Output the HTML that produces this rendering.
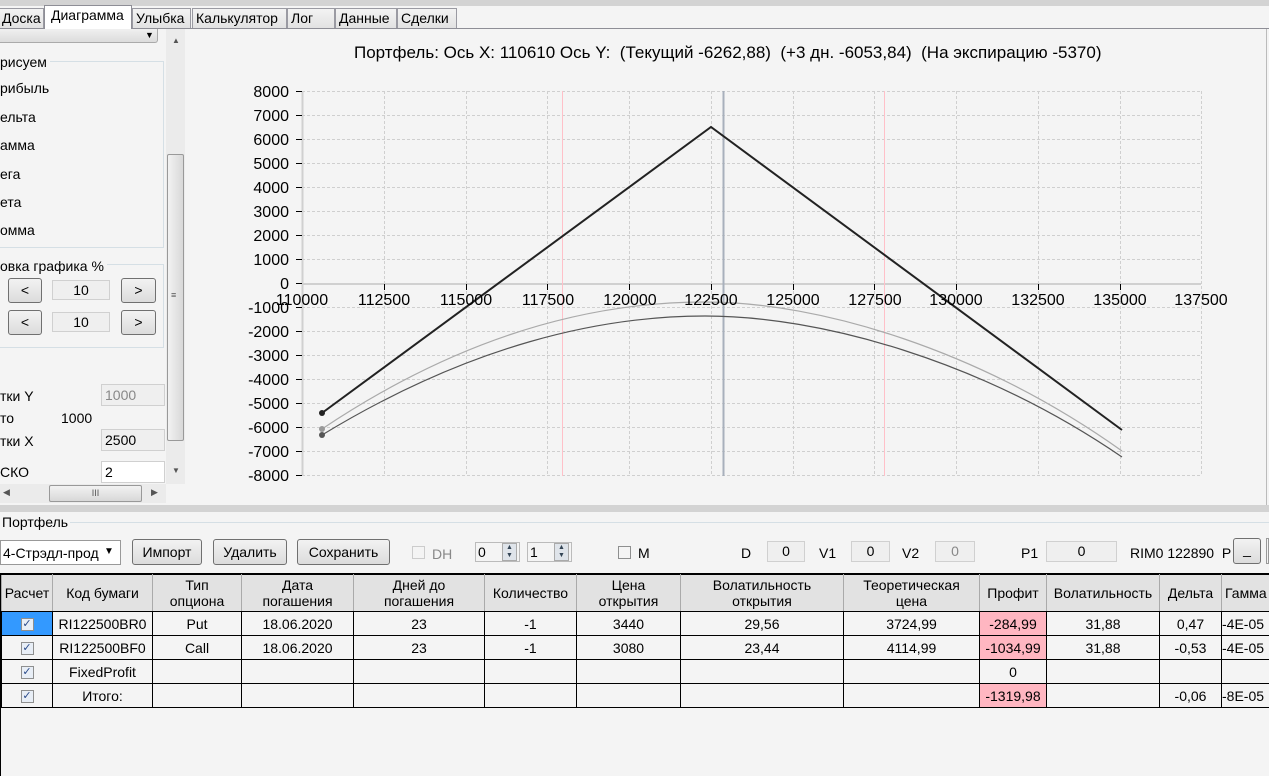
<!DOCTYPE html>
<html><head><meta charset="utf-8"><style>
*{box-sizing:border-box;margin:0;padding:0}
body{width:1269px;height:776px;overflow:hidden;background:#f4f4f4;font-family:"Liberation Sans",sans-serif;font-size:14px;color:#000;position:relative}
.a{position:absolute}
.tab{position:absolute;top:8px;height:20px;border:1px solid #9a9aa2;border-bottom:none;background:linear-gradient(#f3f3f3,#e2e2e2);padding:1px 3px;font-size:14px;white-space:nowrap;overflow:hidden}
.btn{position:absolute;border:1px solid #707070;border-radius:3px;background:linear-gradient(#f2f2f2,#dcdcdc);text-align:center;font-size:14px}
.box{position:absolute;border:1px solid #d0d0d0;background:#efefef;text-align:center;font-size:14px}
.cb{position:absolute;width:13px;height:13px;border:1px solid #8e8f8f;background:#f4f4f4}
table{border-collapse:collapse;position:absolute;left:1px;top:574px;font-size:14px;table-layout:fixed}
td,th{border:1px solid #000;text-align:center;height:24px;padding:0;white-space:nowrap;overflow:hidden}
th{background:#e2e2e2;font-weight:normal;line-height:16px;height:37px;border-color:#000 #aaa #000 #aaa}
.p{background:#ffb6c1}
.chk{display:inline-block;width:13px;height:13px;border:1px solid #8e8f8f;background:#e8eef6;font-size:11px;line-height:11px;color:#2a4a8a;vertical-align:middle}
</style></head><body>
<div class="a" style="left:0;top:0;width:1269px;height:6px;background:#d3d3d3"></div>
<div class="a" style="left:0;top:28px;width:1269px;height:1px;background:#8e8e96"></div>
<div class="tab" style="left:-2px;width:46px">Доска</div>
<div class="tab" style="left:44px;top:5px;height:24px;width:88px;background:#fff;border-color:#8e8e96;padding-left:6px">Диаграмма</div>
<div class="tab" style="left:132px;width:59px">Улыбка</div>
<div class="tab" style="left:192px;width:95px">Калькулятор</div>
<div class="tab" style="left:287px;width:48px">Лог</div>
<div class="tab" style="left:335px;width:62px">Данные</div>
<div class="tab" style="left:397px;width:60px">Сделки</div>

<div class="a" style="left:0;top:29px;width:185px;height:476px;background:#f4f4f4"></div>
<div class="a" style="left:-4px;top:29px;width:162px;height:14px;border:1px solid #aaa;border-top:none;border-radius:0 0 3px 3px;background:linear-gradient(#f0f0f0,#dcdcdc)"></div>
<div class="a" style="left:145px;top:30px;font-size:9px">▼</div>
<div class="a" style="left:0;top:61px;width:164px;height:187px;border-top:1px solid #d5dfe5;border-right:1px solid #d5dfe5;border-bottom:1px solid #d5dfe5"></div>
<div class="a" style="left:0;top:54px;background:#f4f4f4;padding-right:3px">рисуем</div>
<div class="a" style="left:0;top:80px">рибыль</div>
<div class="a" style="left:0;top:109px">ельта</div>
<div class="a" style="left:0;top:137px">амма</div>
<div class="a" style="left:0;top:166px">ега</div>
<div class="a" style="left:0;top:194px">ета</div>
<div class="a" style="left:0;top:222px">омма</div>
<div class="a" style="left:0;top:264px;width:164px;height:84px;border-top:1px solid #d5dfe5;border-right:1px solid #d5dfe5;border-bottom:1px solid #d5dfe5"></div>
<div class="a" style="left:0;top:258px;background:#f4f4f4;padding-right:3px">овка графика %</div>
<div class="btn" style="left:8px;top:278px;width:34px;height:25px;line-height:23px">&lt;</div>
<div class="box" style="left:52px;top:280px;width:58px;height:20px;line-height:18px">10</div>
<div class="btn" style="left:121px;top:278px;width:35px;height:25px;line-height:23px">&gt;</div>
<div class="btn" style="left:8px;top:310px;width:34px;height:25px;line-height:23px">&lt;</div>
<div class="box" style="left:52px;top:312px;width:58px;height:20px;line-height:18px">10</div>
<div class="btn" style="left:121px;top:310px;width:35px;height:25px;line-height:23px">&gt;</div>
<div class="a" style="left:0;top:388px">тки Y</div>
<div class="box" style="left:101px;top:384px;width:64px;height:22px;line-height:20px;text-align:left;padding-left:3px;color:#888">1000</div>
<div class="a" style="left:0;top:410px">то</div>
<div class="a" style="left:61px;top:410px">1000</div>
<div class="a" style="left:0;top:433px">тки X</div>
<div class="box" style="left:101px;top:429px;width:64px;height:22px;line-height:20px;text-align:left;padding-left:3px">2500</div>
<div class="a" style="left:0;top:464px">СКО</div>
<div class="box" style="left:101px;top:461px;width:64px;height:22px;line-height:20px;text-align:left;padding-left:3px;background:#fff">2</div>
<div class="a" style="left:166px;top:29px;width:19px;height:455px;background:#ebebeb"></div>
<div class="a" style="left:172px;top:36px;font-size:8px;color:#555">▲</div>
<div class="a" style="left:167px;top:154px;width:17px;height:287px;border:1px solid #999;border-radius:2px;background:linear-gradient(90deg,#f2f2f2,#d8d8d8)"></div>
<div class="a" style="left:171px;top:290px;font-size:9px;color:#555">≡</div>
<div class="a" style="left:172px;top:466px;font-size:8px;color:#555">▼</div>
<div class="a" style="left:0;top:484px;width:166px;height:19px;background:#ebebeb"></div>
<div class="a" style="left:3px;top:487px;font-size:9px;color:#555">◀</div>
<div class="a" style="left:49px;top:485px;width:93px;height:17px;border:1px solid #999;border-radius:2px;background:linear-gradient(#f2f2f2,#d8d8d8);text-align:center;font-size:9px;line-height:15px;color:#555">III</div>
<div class="a" style="left:151px;top:487px;font-size:9px;color:#555">▶</div>

<div class="a" style="left:185px;top:29px;width:1082px;height:476px;background:#f4f4f4"></div>
<div class="a" style="left:354px;top:43px;font-size:17px;white-space:nowrap">Портфель: Ось X: 110610 Ось Y:&nbsp; (Текущий -6262,88)&nbsp; (+3 дн. -6053,84)&nbsp; (На экспирацию -5370)</div>
<svg class="a" style="left:0;top:0" width="1269" height="505">
<g stroke="#cfcfcf" stroke-dasharray="3,2" stroke-width="1">
<line x1="302" y1="91.5" x2="1201" y2="91.5"/><line x1="302" y1="115.5" x2="1201" y2="115.5"/><line x1="302" y1="139.5" x2="1201" y2="139.5"/><line x1="302" y1="163.5" x2="1201" y2="163.5"/><line x1="302" y1="187.5" x2="1201" y2="187.5"/><line x1="302" y1="211.5" x2="1201" y2="211.5"/><line x1="302" y1="235.5" x2="1201" y2="235.5"/><line x1="302" y1="259.5" x2="1201" y2="259.5"/>
<line x1="302" y1="307.5" x2="1201" y2="307.5"/><line x1="302" y1="331.5" x2="1201" y2="331.5"/><line x1="302" y1="355.5" x2="1201" y2="355.5"/><line x1="302" y1="379.5" x2="1201" y2="379.5"/><line x1="302" y1="403.5" x2="1201" y2="403.5"/><line x1="302" y1="427.5" x2="1201" y2="427.5"/><line x1="302" y1="451.5" x2="1201" y2="451.5"/><line x1="302" y1="475.5" x2="1201" y2="475.5"/>
<line x1="384.5" y1="91" x2="384.5" y2="476"/><line x1="466.5" y1="91" x2="466.5" y2="476"/><line x1="547.5" y1="91" x2="547.5" y2="476"/><line x1="629.5" y1="91" x2="629.5" y2="476"/><line x1="711.5" y1="91" x2="711.5" y2="476"/><line x1="793.5" y1="91" x2="793.5" y2="476"/><line x1="874.5" y1="91" x2="874.5" y2="476"/><line x1="956.5" y1="91" x2="956.5" y2="476"/><line x1="1038.5" y1="91" x2="1038.5" y2="476"/><line x1="1120.5" y1="91" x2="1120.5" y2="476"/><line x1="1201.5" y1="91" x2="1201.5" y2="476"/>
</g>
<line x1="302.5" y1="91" x2="302.5" y2="476" stroke="#d0d0d0" stroke-width="2"/>
<line x1="302" y1="284" x2="1201" y2="284" stroke="#d0d0d0" stroke-width="2"/>
<g stroke="#000"><line x1="296" y1="91.5" x2="302" y2="91.5"/><line x1="296" y1="115.5" x2="302" y2="115.5"/><line x1="296" y1="139.5" x2="302" y2="139.5"/><line x1="296" y1="163.5" x2="302" y2="163.5"/><line x1="296" y1="187.5" x2="302" y2="187.5"/><line x1="296" y1="211.5" x2="302" y2="211.5"/><line x1="296" y1="235.5" x2="302" y2="235.5"/><line x1="296" y1="259.5" x2="302" y2="259.5"/><line x1="296" y1="283.5" x2="302" y2="283.5"/><line x1="296" y1="307.5" x2="302" y2="307.5"/><line x1="296" y1="331.5" x2="302" y2="331.5"/><line x1="296" y1="355.5" x2="302" y2="355.5"/><line x1="296" y1="379.5" x2="302" y2="379.5"/><line x1="296" y1="403.5" x2="302" y2="403.5"/><line x1="296" y1="427.5" x2="302" y2="427.5"/><line x1="296" y1="451.5" x2="302" y2="451.5"/><line x1="296" y1="475.5" x2="302" y2="475.5"/>
<line x1="384.5" y1="284" x2="384.5" y2="290"/><line x1="466.5" y1="284" x2="466.5" y2="290"/><line x1="547.5" y1="284" x2="547.5" y2="290"/><line x1="629.5" y1="284" x2="629.5" y2="290"/><line x1="711.5" y1="284" x2="711.5" y2="290"/><line x1="793.5" y1="284" x2="793.5" y2="290"/><line x1="874.5" y1="284" x2="874.5" y2="290"/><line x1="956.5" y1="284" x2="956.5" y2="290"/><line x1="1038.5" y1="284" x2="1038.5" y2="290"/><line x1="1120.5" y1="284" x2="1120.5" y2="290"/></g>
<line x1="562.5" y1="91" x2="562.5" y2="476" stroke="#ffc0c8"/>
<line x1="884.5" y1="91" x2="884.5" y2="476" stroke="#ffc0c8"/>
<line x1="723.5" y1="91" x2="723.5" y2="476" stroke="#a8b0bc" stroke-width="2"/>
<path d="M322,429 C470,330 600,302 705,302 C820,302 980,350 1122,451" fill="none" stroke="#aaa" stroke-width="1.2"/>
<path d="M322,435 C470,345 600,316 705,316 C820,316 980,360 1122,457" fill="none" stroke="#555" stroke-width="1.2"/>
<polyline points="322,413 711,127 1122,430" fill="none" stroke="#222" stroke-width="2"/>
<circle cx="322" cy="413" r="3" fill="#222"/><circle cx="322" cy="429" r="3" fill="#999"/><circle cx="322" cy="435" r="3" fill="#555"/>
<g font-family="Liberation Sans" font-size="16" text-anchor="end">
<text x="289" y="97">8000</text><text x="289" y="121">7000</text><text x="289" y="145">6000</text><text x="289" y="169">5000</text><text x="289" y="193">4000</text><text x="289" y="217">3000</text><text x="289" y="241">2000</text><text x="289" y="265">1000</text><text x="289" y="289">0</text><text x="289" y="313">-1000</text><text x="289" y="337">-2000</text><text x="289" y="361">-3000</text><text x="289" y="385">-4000</text><text x="289" y="409">-5000</text><text x="289" y="433">-6000</text><text x="289" y="457">-7000</text><text x="289" y="481">-8000</text></g>
<g font-family="Liberation Sans" font-size="16" text-anchor="middle">
<text x="302" y="305">110000</text><text x="384" y="305">112500</text><text x="466" y="305">115000</text><text x="548" y="305">117500</text><text x="630" y="305">120000</text><text x="711" y="305">122500</text><text x="793" y="305">125000</text><text x="875" y="305">127500</text><text x="956" y="305">130000</text><text x="1038" y="305">132500</text><text x="1120" y="305">135000</text><text x="1201" y="305">137500</text></g>
</svg>
<div class="a" style="left:1266px;top:29px;width:1px;height:476px;background:#bbb"></div>

<div class="a" style="left:0;top:505px;width:1269px;height:7px;background:#d3d3d3"></div>
<div class="a" style="left:0;top:522px;width:1269px;height:1px;background:#d5dfe5"></div>
<div class="a" style="left:0;top:514px;background:#f4f4f4;padding:0 2px 0 2px">Портфель</div>
<div class="a" style="left:0;top:540px;width:121px;height:25px;border:1px solid #999;background:#fff;padding:4px 2px;font-size:14px;white-space:nowrap;overflow:hidden">4-Стрэдл-прод</div>
<div class="a" style="left:104px;top:546px;font-size:10px;background:#fff">▼</div>
<div class="btn" style="left:132px;top:539px;width:70px;height:26px;line-height:24px">Импорт</div>
<div class="btn" style="left:213px;top:539px;width:74px;height:26px;line-height:24px">Удалить</div>
<div class="btn" style="left:297px;top:539px;width:93px;height:26px;line-height:24px">Сохранить</div>
<div class="cb" style="left:412px;top:546px;border-color:#ccc"></div>
<div class="a" style="left:432px;top:546px;color:#888">DH</div>
<div class="a" style="left:475px;top:542px;width:45px;height:20px;border:1px solid #bbb;background:#f4f4f4;padding:1px 2px">0</div>
<div class="a" style="left:502px;top:543px;width:15px;height:18px;border:1px solid #aaa;background:#dfe4ea;font-size:7px;line-height:8px;text-align:center;color:#345">▲<br>▼</div>
<div class="a" style="left:527px;top:542px;width:45px;height:20px;border:1px solid #bbb;background:#f4f4f4;padding:1px 2px">1</div>
<div class="a" style="left:554px;top:543px;width:15px;height:18px;border:1px solid #aaa;background:#dfe4ea;font-size:7px;line-height:8px;text-align:center;color:#345">▲<br>▼</div>
<div class="cb" style="left:618px;top:546px"></div>
<div class="a" style="left:638px;top:545px">M</div>
<div class="a" style="left:741px;top:545px">D</div>
<div class="box" style="left:767px;top:541px;width:38px;height:21px;line-height:19px">0</div>
<div class="a" style="left:819px;top:545px">V1</div>
<div class="box" style="left:851px;top:541px;width:39px;height:21px;line-height:19px">0</div>
<div class="a" style="left:902px;top:545px">V2</div>
<div class="box" style="left:935px;top:541px;width:40px;height:21px;line-height:19px;color:#888">0</div>
<div class="a" style="left:1021px;top:545px">P1</div>
<div class="box" style="left:1046px;top:541px;width:71px;height:21px;line-height:19px">0</div>
<div class="a" style="left:1130px;top:545px;white-space:nowrap">RIM0 122890&nbsp; P</div>
<div class="btn" style="left:1233px;top:538px;width:28px;height:26px;line-height:20px">_</div>
<div class="a" style="left:1266px;top:538px;width:3px;height:26px;border:1px solid #999"></div>

<div class="a" style="left:0;top:573px;width:1269px;height:203px;background:#f4f4f4;border-top:2px solid #000;border-left:1px solid #000"></div>
<table style="width:1320px">
<colgroup><col style="width:51px"><col style="width:100px"><col style="width:89px"><col style="width:112px"><col style="width:131px"><col style="width:92px"><col style="width:104px"><col style="width:163px"><col style="width:136px"><col style="width:67px"><col style="width:113px"><col style="width:62px"><col style="width:100px"></colgroup>
<tr><th>Расчет</th><th>Код бумаги</th><th>Тип<br>опциона</th><th>Дата<br>погашения</th><th>Дней до<br>погашения</th><th>Количество</th><th>Цена<br>открытия</th><th>Волатильность<br>открытия</th><th>Теоретическая<br>цена</th><th>Профит</th><th>Волатильность</th><th>Дельта</th><th style="text-align:left;padding-left:3px">Гамма</th></tr>
<tr><td style="background:#3399ff"><span class="chk">✓</span></td><td>RI122500BR0</td><td>Put</td><td>18.06.2020</td><td>23</td><td>-1</td><td>3440</td><td>29,56</td><td>3724,99</td><td class="p">-284,99</td><td>31,88</td><td>0,47</td><td style="text-align:left">-4E-05</td></tr>
<tr><td><span class="chk">✓</span></td><td>RI122500BF0</td><td>Call</td><td>18.06.2020</td><td>23</td><td>-1</td><td>3080</td><td>23,44</td><td>4114,99</td><td class="p">-1034,99</td><td>31,88</td><td>-0,53</td><td style="text-align:left">-4E-05</td></tr>
<tr><td><span class="chk">✓</span></td><td>FixedProfit</td><td></td><td></td><td></td><td></td><td></td><td></td><td></td><td>0</td><td></td><td></td><td></td></tr>
<tr><td><span class="chk">✓</span></td><td>Итого:</td><td></td><td></td><td></td><td></td><td></td><td></td><td></td><td class="p">-1319,98</td><td></td><td>-0,06</td><td style="text-align:left">-8E-05</td></tr>
</table>
</body></html>
